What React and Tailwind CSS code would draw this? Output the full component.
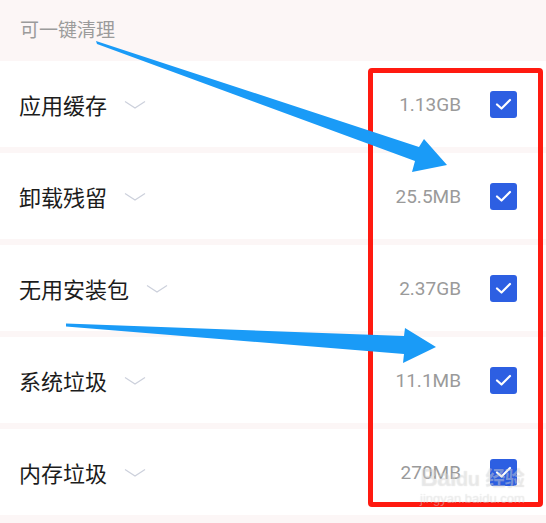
import React from 'react';

const items = [
  { name: '应用缓存', size: '1.13GB' },
  { name: '卸载残留', size: '25.5MB' },
  { name: '无用安装包', size: '2.37GB' },
  { name: '系统垃圾', size: '11.1MB' },
  { name: '内存垃圾', size: '270MB' },
];

const Chevron = () => (
  <svg width="22" height="10" viewBox="0 0 22 10" className="ml-[17px] mt-[2px]">
    <path d="M1 1.5 L11 8 L21 1.5" fill="none" stroke="#cdd1dc" strokeWidth="1.3" />
  </svg>
);

const Checkbox = () => (
  <div className="flex h-[27px] w-[27px] items-center justify-center rounded-[3px] bg-[#2d5fe2]">
    <svg width="17" height="13" viewBox="0 0 17 13">
      <path d="M2 6.5 L6.5 10.5 L15 2" fill="none" stroke="#fff" strokeWidth="2.2" strokeLinecap="round" strokeLinejoin="round" />
    </svg>
  </div>
);

const Row = ({ name, size }) => (
  <div className="flex h-[86px] items-center bg-white pl-[19px] pr-[29px]">
    <span className="text-[22px] leading-none text-[#1c1c1c]">{name}</span>
    <Chevron />
    <span className="ml-auto text-[19px] leading-none text-[#9a9a9a] font-['Roboto',sans-serif]">{size}</span>
    <div className="ml-[29px]">
      <Checkbox />
    </div>
  </div>
);

export default function App() {
  return (
    <div className="relative h-[523px] w-[546px] overflow-hidden bg-[#fcf6f6] font-['Noto_Sans_CJK_SC','Noto_Sans',sans-serif]">
      <div className="flex h-[61px] items-center pb-[5px] pl-[20px]">
        <span className="text-[19px] leading-none text-[#9b9b9b]">可一键清理</span>
      </div>
      <div className="flex flex-col gap-[6px]">
        {items.map((it) => (
          <Row key={it.name} name={it.name} size={it.size} />
        ))}
      </div>

      {/* annotation: red frame */}
      <div className="absolute left-[368px] top-[68px] h-[439px] w-[175px] rounded-[4px] border-[5px] border-[#ff1a10]" />

      {/* annotation: arrows */}
      <svg className="absolute left-0 top-0" width="546" height="523" viewBox="0 0 546 523">
        <polygon
          points="96,41 419,147 424,139 447,165 412,172 415,161 97,44"
          fill="#1a9bf7"
        />
        <polygon
          points="66,323.5 404,336 405,328 436,347 403,363 404,354 66,326.5"
          fill="#1a9bf7"
        />
      </svg>

      {/* watermark */}
      <div className="absolute left-[420px] top-[466px] flex flex-col items-center text-white/40 [text-shadow:0_0_1px_rgba(0,0,0,0.15)]">
        <span className="text-[24px] font-bold leading-none tracking-tight font-['Liberation_Sans',sans-serif]">
          Bai<span className="text-[20px]">du</span> <span className="text-[20px] font-['Noto_Sans_CJK_SC',sans-serif]">经验</span>
        </span>
        <span className="mt-[2px] text-[13px] leading-none font-['Liberation_Sans',sans-serif]">jingyan.baidu.com</span>
      </div>
    </div>
  );
}
